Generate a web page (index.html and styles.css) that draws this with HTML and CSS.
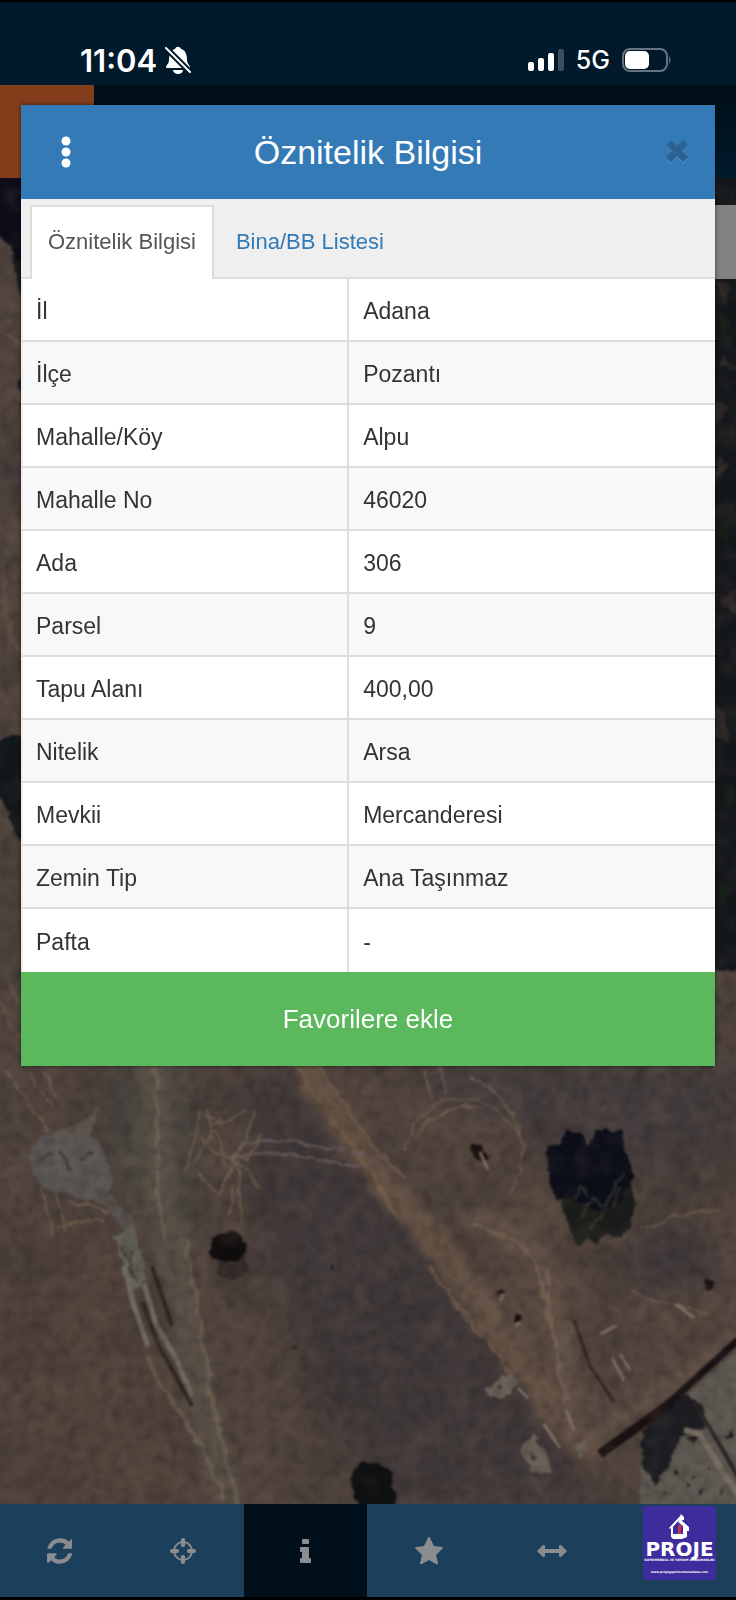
FILE: index.html
```html
<!DOCTYPE html>
<html lang="tr">
<head>
  <meta charset="UTF-8" />
  <meta name="viewport" content="width=device-width, initial-scale=1.0" />
  <title>Öznitelik Bilgisi</title>
  <link rel="stylesheet" href="styles.css">
</head>
<body>

  <div class="status-bar">
    <div class="status-left">
      <span class="clock">11:04</span>
      <svg class="bell" viewBox="0 0 26 28" aria-hidden="true">
        <path fill="#fff" d="M1 21c0-2 3-3 3-7 0-6 2-10 6-11 1-3 5-3 6 0 4 1 6 5 6 11 0 4 3 5 3 7 0 1-1 1-2 1H3c-1 0-2 0-2-1zM8 24h10c0 2-2 4-5 4s-5-2-5-4z"/>
        <path stroke="#00192b" stroke-width="6" d="M1 2l24 24"/>
        <path stroke="#fff" stroke-width="2" stroke-linecap="round" d="M1 2l24 24"/>
      </svg>
    </div>
    <div class="status-right">
      <svg class="signal" viewBox="0 0 36 24" aria-hidden="true">
        <rect x="0" y="14" width="6" height="9" rx="2" fill="#fff"/>
        <rect x="10" y="10" width="6" height="13" rx="2" fill="#fff"/>
        <rect x="20" y="5" width="6" height="18" rx="2" fill="#fff"/>
        <rect x="30" y="1" width="6" height="22" rx="2" fill="#3a4f5f"/>
      </svg>
      <span class="network">5G</span>
      <svg class="battery" viewBox="0 0 50 24" aria-hidden="true">
        <rect x="1" y="1" width="44" height="22" rx="7" fill="none" stroke="#66747f" stroke-width="2"/>
        <rect x="3" y="3" width="24" height="18" rx="5" fill="#fff"/>
        <path d="M47 8q3 4 0 8z" fill="#66747f"/>
      </svg>
    </div>
  </div>

  <div class="app-bar">
    <div class="app-menu"></div>
  </div>

  <main class="map">
    <svg class="map-image" viewBox="0 178 736 1326" preserveAspectRatio="xMidYMin slice" aria-hidden="true">
      <defs>
        <filter id="grain" x="0" y="0" width="100%" height="100%" color-interpolation-filters="sRGB">
          <feTurbulence type="fractalNoise" baseFrequency="0.09" numOctaves="4" seed="8"/>
          <feColorMatrix values="0 0 0 0 0.08  0 0 0 0 0.07  0 0 0 0 0.08  2 0 0 0 -0.8"/>
          <feGaussianBlur stdDeviation="1"/>
        </filter>
        <filter id="light" x="0" y="0" width="100%" height="100%" color-interpolation-filters="sRGB">
          <feTurbulence type="fractalNoise" baseFrequency="0.04" numOctaves="5" seed="21"/>
          <feColorMatrix values="0 0 0 0 0.55  0 0 0 0 0.49  0 0 0 0 0.44  2 0 0 0 -0.85"/>
          <feGaussianBlur stdDeviation="1"/>
        </filter>
        <filter id="patches" x="0" y="0" width="100%" height="100%" color-interpolation-filters="sRGB">
          <feTurbulence type="fractalNoise" baseFrequency="0.014" numOctaves="4" seed="3"/>
          <feColorMatrix values="0 0 0 0 0.19  0 0 0 0 0.17  0 0 0 0 0.18  2 0 0 0 -0.8"/>
        </filter>
        <filter id="soft" x="-20%" y="-20%" width="140%" height="140%" color-interpolation-filters="sRGB">
          <feTurbulence type="fractalNoise" baseFrequency="0.06" numOctaves="3" seed="5"/>
          <feDisplacementMap in="SourceGraphic" scale="10" xChannelSelector="R" yChannelSelector="G"/>
          <feGaussianBlur stdDeviation="1"/>
        </filter>
        <filter id="road" x="-20%" y="-20%" width="140%" height="140%" color-interpolation-filters="sRGB">
          <feTurbulence type="fractalNoise" baseFrequency="0.06" numOctaves="3" seed="5"/>
          <feDisplacementMap in="SourceGraphic" scale="20" xChannelSelector="R" yChannelSelector="G"/>
          <feGaussianBlur stdDeviation="4"/>
        </filter>
        <filter id="wide" x="-30%" y="-30%" width="160%" height="160%" color-interpolation-filters="sRGB">
          <feGaussianBlur stdDeviation="14"/>
        </filter>
        <filter id="edge" x="-20%" y="-20%" width="140%" height="140%" color-interpolation-filters="sRGB">
          <feTurbulence type="fractalNoise" baseFrequency="0.1" numOctaves="3" seed="2"/>
          <feDisplacementMap in="SourceGraphic" scale="8" xChannelSelector="R" yChannelSelector="G"/>
          <feGaussianBlur stdDeviation="1"/>
        </filter>
        <filter id="line" x="-20%" y="-20%" width="140%" height="140%" color-interpolation-filters="sRGB">
          <feGaussianBlur stdDeviation="1"/>
        </filter>
      </defs>

      <rect y="178" width="736" height="1326" fill="#53463f"/>

      <!-- large tone changes of the ground -->
      <g filter="url(#wide)">
        <path fill="#433b3b" d="M250 1066h40l130 150 110 160 60 128H380l-90-180-40-120z"/>
        <path fill="#473f3f" d="M400 1060h336v90l-100 20-180-50z"/>
        <path fill="#594a41" d="M430 1100l90 30 70 140 140-90v150l-180 110-60-110z"/>
        <path fill="#54453d" d="M0 1230h120l60 120 40 154H0z"/>
        <path fill="#504b44" d="M110 1060h80l10 170-40 40-50-110z"/>
        <path fill="#433b3c" d="M630 1240l70-20 20 60-80 20z"/>
      </g>
      <rect y="178" width="736" height="1326" filter="url(#patches)" opacity=".4"/>

      <!-- dirt tracks -->
      <g filter="url(#road)" fill="none" stroke-linecap="round">
        <path stroke="#655245" stroke-width="28" d="M300 1060c40 60 70 110 120 165s60 90 90 125 50 75 80 100"/>
        <path stroke="#655448" stroke-width="20" opacity=".8" d="M478 1222c45 12 65 30 73 68s14 80 24 145"/>
        <path stroke="#5a5047" stroke-width="30" d="M152 1060c12 60-2 110 15 175s25 120 35 170 20 70 28 100"/>
        <path stroke="#655448" stroke-width="16" opacity=".7" d="M590 1440l60-40 86-65"/>
      </g>
      <g filter="url(#soft)" fill="none" stroke-linecap="round">
        <path stroke="#7a6350" stroke-width="4" opacity=".6" d="M292 1062c40 60 80 105 105 155M430 1266c35 55 60 75 78 104M318 1066c30 50 55 80 84 110"/>
        <path stroke="#7e6b59" stroke-width="4" opacity=".6" d="M475 1225c35 12 60 20 68 60s15 72 22 115M550 1270l-2 40"/>
        <path stroke="#776958" stroke-width="4" opacity=".6" d="M154 1070c10 60-4 120 12 170M185 1240c10 50 20 110 25 145s20 90 28 120M148 1360c30 55 55 75 76 140"/>
        <path stroke="#6d605e" stroke-width="3" opacity=".8" d="M240 1142c50-4 90 6 125 12M235 1155c50-6 90 8 130 12"/>
        <path stroke="#7e6b54" stroke-width="2" opacity=".7" d="M6 1070l42 62M30 1075l22 30M44 1072l14 26M42 1190l10 44M56 1196l10 34M70 1200l36 12M58 1226l46-6M186 1170l14-60 22 14 26-14M200 1174l20 22 16-36 6 60M196 1128l32 40 22-40M208 1108l20 60M230 1216l8-54 20 24M222 1118l-30 46M240 1150l16-40M248 1160l14-26M206 1150l40 8"/>
        <path stroke="#776552" stroke-width="2" opacity=".7" d="M404 1150c14-45 50-66 90-40s34 50 16 80M420 1130c20-22 40-28 60-20M414 1142c16-24 36-38 56-34M426 1070l6 30M440 1066l6 28M470 1078c30 10 50 40 54 70M640 1230c30-10 50-20 80-20M630 1290c20 16 50 12 80 26"/>
      </g>

      <!-- concrete pad and drainage channel -->
      <g filter="url(#edge)">
        <path fill="#5b5754" d="M28 1155l14-20 34-8 26 18 12 40-16 18-58-16z"/>
        <path fill="#5f5750" d="M50 1134l34-14 16-12-10 30z"/>
        <path fill="none" stroke="#59544f" stroke-width="12" d="M96 1190l30 30 8 34"/>
        <path fill="#646159" d="M114 1238l18-12 8 26 8 28-18 10z"/>
        <path fill="none" stroke="#393630" stroke-width="2" d="M122 1246l14 34M134 1250l-6 20M40 1160l14-6M60 1150l10 20M80 1160l10-8"/>
      </g>
      <g filter="url(#line)" fill="none">
        <path stroke="#716b62" stroke-width="5" d="M124 1266l10 40 14 40M144 1284l12 40 20 34 16 38"/>
        <path stroke="#2d2823" stroke-width="4" d="M142 1302l16 42 34 62M152 1266l20 60"/>
      </g>

      <!-- trees -->
      <g filter="url(#edge)">
        <path fill="#352d29" d="M218 1256l28-4 2 20-16 8-14-6z"/>
        <path fill="#0e0c0c" d="M210 1244l6-10 14-4 10 6 6 10-6 14-14 2-14-4z"/>
        <path fill="#1b1d1a" d="M560 1186l4 24 10 30 6 6 8-8 8 4 10-8 8 4 14-6 8-30-10-40-66-6z"/>
        <path fill="#0c0e19" d="M546 1146l16-2 4-14 18 4 4 12 6-16 28 0 4 22 8 26-14 24-24 10-22-14-18 2-6-18z"/>
        <path fill="none" stroke="#3b3d36" stroke-width="3" opacity=".7" d="M574 1196l8-10 8 12M580 1216l14-18 10 10 12-24 8-10M590 1230l12-16M612 1208l8-20"/>
        <path fill="#101113" d="M350 1478l8-14 20-2 14 10 4 40h-36z"/>
        <path fill="#18110f" d="M470 1146l10 0 10 10-4 6-12-4zM494 1294l10-6 2 6zM512 1314l10 2-2 8-6-2zM706 1280l8 0 0 10-8 0zM330 1266l4 0 0 4zM292 1346l6 2-4 2z"/>
      </g>

      <!-- wall, building and rubble -->
      <g filter="url(#edge)">
        <path fill="#5e5952" d="M640 1470l40-70 66-58v172H640z"/>
        <path fill="#1d1d22" d="M642 1432l20-28 26-10 14 14 2 20-24 10-14 34-12 14-12-26z"/>
        <path fill="#211f1f" d="M688 1438l10-2-4 10zM652 1472l8 6-6 6zM686 1484l4 2-4 2zM664 1490l4 4-5 0zM708 1466l4 3-4 2zM700 1490l4 2-4 2zM720 1490l4 2-4 3zM726 1440l6-12 2 6zM674 1470l5 3-5 2zM694 1474l3 4-4 1z"/>
        <path fill="#6a6259" d="M486 1388l16-12 12-4 4 14-12 14-18-4zM520 1450l14-16 14 22 4 18-20-2zM574 1446l12-6 2 14-10 4z"/>
        <path fill="#3c342f" d="M498 1384l4 4-6 2zM532 1452l5 6-6 2zM506 1394l6 2-5 4z"/>
      </g>
      <g filter="url(#line)" fill="none">
        <path stroke="#1a1112" stroke-width="9" d="M600 1454l72-52"/>
        <path stroke="#171113" stroke-width="7" d="M668 1404l70-64"/>
        <path stroke="#7a6f64" stroke-width="6" d="M684 1430l16 4 24 40 18 26"/>
        <path stroke="#2b2524" stroke-width="4" d="M694 1402l30 50 18 32"/>
        <path stroke="#33271f" stroke-width="3" d="M574 1320l16 46 24 36"/>
        <path stroke="#7e7165" stroke-width="3" d="M480 1152l8 18M500 1300l4-6M516 1326l4-4M676 1304l18 14M600 1334l16-8M612 1358l12 22M620 1354l10 16M544 1424l16 24M566 1410l8 20M518 1388l10 10"/>
      </g>

      <!-- strips beside the dialog -->
      <g filter="url(#edge)">
        <path fill="#0d0d18" d="M-5 170h35v115l-12-8-4-24-19-24z"/>
        <path fill="#171d1c" d="M12 260h18v44l-12-14zM18 380h12v34l-8-8z"/>
        <path fill="#11171b" d="M-5 744l14-8h20v110l-16-14-6-24-12-20z"/>
        <path fill="#15181b" d="M706 170h50v780l-20 20-30 2z"/>
        <path fill="#2e2827" d="M716 280l14 8-6 20zM722 355l14 14-16-2zM716 400l12 6-12 20zM718 456l12 10-12 12zM720 600l16-10v26zM714 705l12 8 2 30-14-8z"/>
        <path fill="#162119" d="M718 310l12 8-6 24zM716 530l14-12-4 24zM722 790l14-8-8 32zM718 880l12 10-10 16z"/>
      </g>
      <path fill="none" stroke="#6b5947" stroke-width="3" opacity=".5" filter="url(#soft)" d="M0 330l20 16M2 560l10 90M0 600l18 50M0 1000l20 40M6 980l16 30"/>
      <rect y="178" width="736" height="1326" filter="url(#light)" opacity=".16"/>
      <rect y="178" width="736" height="1326" filter="url(#grain)" opacity=".25"/>
    </svg>
    <div class="map-control"></div>
  </main>

  <nav class="toolbar" aria-label="Harita araçları">
    <button type="button" aria-label="Yenile">
      <svg viewBox="0 0 1536 1792"><path d="M1511 1056q0 5-1 7-64 268-268 434t-478 167q-146 0-282-55t-244-157l-129 129q-19 19-45 19t-45-19-19-45v-448q0-26 19-45t45-19h448q26 0 45 19t19 45-19 45l-137 137q71 66 161 102t187 36q134 0 250-65t186-179q11-17 53-117 8-23 30-23h192q13 0 22 10t10 22zm25-800v448q0 26-19 45t-45 19h-448q-26 0-45-19t-19-45 19-45l138-138q-148-137-349-137-134 0-250 65t-186 179q-11 17-53 117-8 23-30 23h-199q-13 0-22-10t-10-22v-7q65-268 270-434t480-167q146 0 284 56t245 156l130-129q19-19 45-19t45 19 19 45z"/></svg>
    </button>
    <button type="button" aria-label="Konum">
      <svg viewBox="0 0 26 30">
        <circle cx="13" cy="15" r="9" fill="none" stroke="#8b8c90" stroke-width="2"/>
        <path d="M11 3q2-2 4 0v7q-2 2-4 0zM11 20q2-2 4 0v7q-2 2-4 0zM1 13h7q2 2 0 4H1q-2-2 0-4zM18 13h7q2 2 0 4h-7q-2-2 0-4z"/>
      </svg>
    </button>
    <button type="button" class="active" aria-label="Bilgi">
      <svg viewBox="0 0 26 30"><path d="M10 3h5q1 0 1 1v3q0 1-1 1h-5q-1 0-1-1V4q0-1 1-1zM8 11h7q1 0 1 1v10h1q1 0 1 1v3q0 1-1 1H8q-1 0-1-1v-3q0-1 1-1h1v-6H8q-1 0-1-1v-3q0-1 1-1z"/></svg>
    </button>
    <button type="button" aria-label="Favoriler">
      <svg viewBox="0 0 28 30"><path d="M14 1q1 0 1 1l4 8 8 1q2 1 0 2l-6 6 2 8q0 2-2 1l-7-4-7 4q-2 1-2-1l2-8-6-6q-2-1 0-2l8-1 4-8q0-1 1-1z"/></svg>
    </button>
    <button type="button" aria-label="Ölçüm">
      <svg viewBox="0 0 30 30"><path d="M0 15l6-6q2 0 2 1v3h14v-3q0-1 2-1l6 6-6 6q-2 0-2-1v-3H8v3q0 1-2 1z"/></svg>
    </button>
  </nav>

  <div class="brand">
    <svg class="brand-house" viewBox="0 0 22 26" aria-hidden="true">
      <path fill="#fff" d="M0 14L12 1v3L2 15zM12 0l3 3v3L9 7zM12 6l8 7v4h-2v6l-5 2H4l-2-2v-8l2-2v7h10v-8l-5-4z"/>
      <path fill="#c33245" d="M9 12l2-2 2 2-1 4v4H9v-3z"/>
    </svg>
    <strong class="brand-name">PROJE</strong>
    <span class="brand-line">GAYRİMENKUL VE YATIRIM DANIŞMANLIĞI</span>
    <span class="brand-url">www.projegayrimenkuladana.com</span>
  </div>

  <section class="dialog" role="dialog" aria-labelledby="dialog-title">
    <header class="dialog-header">
      <button type="button" class="header-button" aria-label="Menü">
        <svg class="dots" viewBox="0 0 10 32"><circle cx="5" cy="5" r="4.500"/><circle cx="5" cy="16" r="4.500"/><circle cx="5" cy="27" r="4.500"/></svg>
      </button>
      <h1 id="dialog-title">Öznitelik Bilgisi</h1>
      <button type="button" class="header-button" aria-label="Kapat">
        <svg class="close" viewBox="0 0 24 24">
          <path fill="#4585bd" d="M6 2l6 6 6-6 5 5-6 6 6 6-5 5-6-6-6 6-5-5 6-6-6-6z"/>
          <path fill="#296293" d="M6 0l6 6 6-6 5 5-6 6 6 6-5 5-6-6-6 6-5-5 6-6-6-6z"/>
        </svg>
      </button>
    </header>

    <div class="tabs">
      <a href="#oznitelik" class="tab selected">Öznitelik Bilgisi</a>
      <a href="#bina" class="tab">Bina/BB Listesi</a>
    </div>

    <table id="oznitelik">
      <tbody>
        <tr><th scope="row">İl</th><td>Adana</td></tr>
        <tr><th scope="row">İlçe</th><td>Pozantı</td></tr>
        <tr><th scope="row">Mahalle/Köy</th><td>Alpu</td></tr>
        <tr><th scope="row">Mahalle No</th><td>46020</td></tr>
        <tr><th scope="row">Ada</th><td>306</td></tr>
        <tr><th scope="row">Parsel</th><td>9</td></tr>
        <tr><th scope="row">Tapu Alanı</th><td>400,00</td></tr>
        <tr><th scope="row">Nitelik</th><td>Arsa</td></tr>
        <tr><th scope="row">Mevkii</th><td>Mercanderesi</td></tr>
        <tr><th scope="row">Zemin Tip</th><td>Ana Taşınmaz</td></tr>
        <tr><th scope="row">Pafta</th><td>-</td></tr>
      </tbody>
    </table>

    <button type="button" class="favorite">Favorilere ekle</button>
  </section>

</body>
</html>
```
FILE: styles.css
```css
* {
  box-sizing: border-box;
}
body {
  position: relative;
  margin: 0;
  min-height: 100vh;
  display: flex;
  flex-direction: column;
  overflow-x: hidden;
  background: #000;
  font-family: "Liberation Sans", Arial, sans-serif;
  color: #333;
}
button {
  border: none;
  padding: 0;
  font-family: inherit;
  cursor: pointer;
}
.status-bar {
  display: flex;
  justify-content: space-between;
  align-items: flex-end;
  height: 85px;
  padding: 0 64px 8px 80px;
  border-top: 2px solid #000;
  background: #00192b;
  color: #fff;
  font-family: Inter, sans-serif;
}
.status-left,
.status-right {
  display: flex;
  align-items: center;
  height: 34px;
}
.status-left {
  gap: 8px;
}
.status-right {
  gap: 12px;
}
.clock {
  font-size: 31px;
  font-weight: 600;
}
.bell {
  width: 26px;
  height: 28px;
}
.signal {
  width: 36px;
  height: 24px;
}
.network {
  font-size: 25px;
  font-weight: 500;
}
.battery {
  width: 50px;
  height: 24px;
}
.app-bar {
  height: 93px;
  background: linear-gradient(#010e17, #001a2c);
}
.app-menu {
  width: 94px;
  height: 100%;
  background: #833d1b;
}
.map {
  position: relative;
  flex: 1;
  overflow: hidden;
  background: #53463f;
}
.map-image {
  position: absolute;
  width: 100%;
  height: 100%;
}
.map-control {
  position: absolute;
  top: 27px;
  right: 0;
  width: 72px;
  height: 74px;
  background: #828282;
}
.toolbar {
  display: grid;
  grid-template-columns: repeat(6, 1fr);
  height: 93px;
  margin: 0 0 3px -2px;
  background: #1c3f5c;
}
.toolbar button {
  display: flex;
  align-items: center;
  justify-content: center;
  background: none;
}
.toolbar .active {
  background: #000f1a;
}
.toolbar svg {
  height: 30px;
  fill: #8b8c90;
}
.brand {
  position: absolute;
  right: 20px;
  bottom: 20px;
  width: 73px;
  height: 74px;
  display: flex;
  flex-direction: column;
  align-items: center;
  padding-top: 8px;
  background: #3c2c9c;
  color: #fff;
  font-family: "DejaVu Sans", sans-serif;
  font-weight: bold;
  white-space: nowrap;
}
.brand-house {
  height: 26px;
}
.brand-name {
  font-size: 20px;
  line-height: 18px;
}
.brand-line {
  font-size: 3px;
  line-height: 4px;
}
.brand-url {
  margin-top: 8px;
  font-size: 3px;
  line-height: 4px;
}
.dialog {
  position: absolute;
  top: 105px;
  left: 21px;
  right: 21px;
  background: #fff;
  box-shadow: 0 0 4px rgba(0, 0, 0, 0.6);
}
.dialog-header {
  display: flex;
  align-items: center;
  justify-content: space-between;
  height: 94px;
  background: #337ab7;
}
.dialog-header h1 {
  margin: 0;
  color: #fff;
  font-size: 34px;
  font-weight: normal;
}
.header-button {
  display: flex;
  align-items: center;
  justify-content: center;
  width: 90px;
  height: 94px;
  background: none;
}
.dots {
  height: 32px;
  fill: #fff;
}
.close {
  width: 24px;
  height: 24px;
  margin-left: 14px;
}
.tabs {
  display: flex;
  gap: 4px;
  height: 80px;
  padding: 6px 9px 0;
  border-bottom: 2px solid #ddd;
  background: #efefef;
}
.tab {
  height: 74px;
  padding: 0 16px;
  border: 2px solid transparent;
  border-bottom: none;
  color: #337ab7;
  font-size: 22px;
  line-height: 70px;
  text-decoration: none;
}
.tab.selected {
  border-color: #ddd;
  background: #fff;
  color: #555;
}
table {
  width: 100%;
  table-layout: fixed;
  border-collapse: separate;
  border-spacing: 0;
  font-size: 23px;
}
th,
td {
  height: 63px;
  padding: 4px 14px 0;
  border-left: 2px solid #ddd;
  border-bottom: 2px solid #ddd;
  font-weight: normal;
  text-align: left;
}
th {
  width: 47%;
  padding-left: 13px;
  border-left-color: #eee;
}
tr:nth-child(even) {
  background: #f8f8f8;
}
tr:last-child th,
tr:last-child td {
  border-bottom: none;
}
.favorite {
  display: block;
  width: 100%;
  height: 94px;
  background: #5cb85c;
  color: #fff;
  font-size: 26px;
}
```
